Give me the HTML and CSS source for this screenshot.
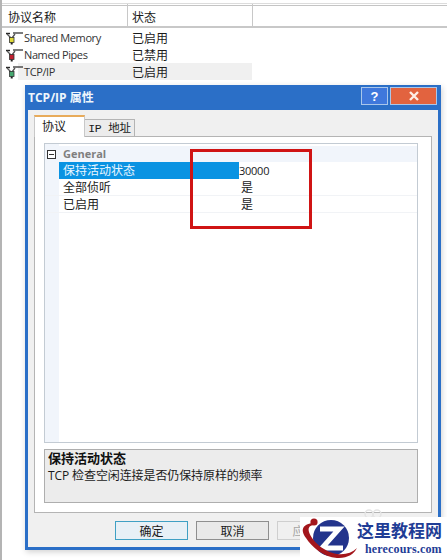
FILE: index.html
```html
<!DOCTYPE html>
<html lang="zh-CN">
<head>
<meta charset="utf-8">
<title>TCP/IP 属性</title>
<link rel="stylesheet" href="styles.css">
</head>
<body>
<svg width="0" height="0" class="defs">
  <symbol id="plug" viewBox="0 0 17 14">
    <path d="M0 2.5h4" stroke="#222" stroke-width="1.4" fill="none"/>
    <path d="M1 3l4 4M9 3L6 7" stroke="#555" stroke-width="1.3" fill="none"/>
    <path d="M7 2h10" stroke="#333" stroke-width="1.3" fill="none"/>
    <rect x="3.5" y="6.5" width="4.5" height="5" fill="currentColor" stroke="#333" stroke-width=".8"/>
    <path d="M5.7 11.5v2" stroke="#222" stroke-width="2"/>
  </symbol>
</svg>
<main class="manager">
  <div class="list-head">
    <div class="col col-name">协议名称</div>
    <div class="col col-state">状态</div>
  </div>
  <ul class="list">
    <li class="row"><svg class="plug plug-on"><use href="#plug"/></svg><span class="cell-name">Shared Memory</span><span class="cell-state">已启用</span></li>
    <li class="row"><svg class="plug plug-off"><use href="#plug"/></svg><span class="cell-name">Named Pipes</span><span class="cell-state">已禁用</span></li>
    <li class="row row-hover"><svg class="plug plug-tcp"><use href="#plug"/></svg><span class="cell-name">TCP/IP</span><span class="cell-state">已启用</span></li>
  </ul>
</main>

<section class="dialog">
  <header class="titlebar">
    <span class="title">TCP/IP 属性</span>
    <span class="winbtn help">?</span>
    <span class="winbtn close">
      <svg width="10" height="10" viewBox="0 0 10 10"><path d="M1 1l8 8M9 1l-8 8" stroke="#fdeee6" stroke-width="2.4"/></svg>
    </span>
  </header>
  <div class="client">
    <div class="tabs">
      <div class="tab tab-active">协议</div>
      <div class="tab">IP 地址</div>
    </div>
    <div class="panel">
      <div class="grid">
        <div class="group"><span class="minus"></span><span>General</span></div>
        <div class="prop prop-selected"><span class="prop-name">保持活动状态</span><span class="prop-value">30000</span></div>
        <div class="prop"><span class="prop-name">全部侦听</span><span class="prop-value prop-yes">是</span></div>
        <div class="prop"><span class="prop-name">已启用</span><span class="prop-value prop-yes">是</span></div>
      </div>
      <div class="desc">
        <div class="desc-title">保持活动状态</div>
        <div class="desc-text">TCP 检查空闲连接是否仍保持原样的频率</div>
      </div>
    </div>
    <div class="buttons">
      <button class="btn btn-default">确定</button>
      <button class="btn">取消</button>
      <button class="btn btn-disabled">应用</button>
    </div>
  </div>
</section>

<div class="marker"></div>

<aside class="watermark">
  <svg class="ghost" width="18" height="9" viewBox="0 0 18 9"><circle cx="5" cy="6" r="4" fill="none" stroke="#e4e4e4" stroke-width="1.5"/><circle cx="13" cy="6" r="4" fill="none" stroke="#e4e4e4" stroke-width="1.5"/></svg>
  <svg class="logo" width="60" height="43" viewBox="0 0 60 43">
    <circle cx="31" cy="21" r="18" fill="#23348c"/>
    <path d="M20 12H39L22 31H43" fill="none" stroke="#fff" stroke-width="5"/>
    <path d="M12 6C1 8 1 14 6 21c6 9 17 19 31 20 10 .7 17-4 20-10-5 5-12 7-20 6C24 35 12 24 9 15c-1-4 0-6 4-7z" fill="#a3161c"/>
    <circle cx="14" cy="5" r="3.6" fill="#a3161c"/>
  </svg>
  <div class="brand">
    <div class="brand-cn">这里教程网</div>
    <div class="brand-en">herecours.com</div>
  </div>
</aside>
</body>
</html>
```
FILE: styles.css
```css
* { box-sizing: border-box; }
html, body { margin: 0; padding: 0; }
body {
  width: 447px;
  height: 560px;
  overflow: hidden;
  position: relative;
  background: #fff;
  color: #1a1a1a;
  font: 12px/16px "Open Sans", "Noto Sans CJK SC", sans-serif;
}
.defs { position: absolute; }

.manager {
  height: 560px;
  padding: 3px 0 0 0;
  border-left: 2px solid #b4b4b4;
}
.list-head {
  display: flex;
  height: 25px;
  border-top: 1px solid #dcdcdc;
  background: linear-gradient(#fff 1px, #c4c4c4 1px, #c4c4c4 2px, #fff 2px);
  border-bottom: 2px solid #c8c8c8;
  align-items: stretch;
}
.col {
  display: flex;
  align-items: center;
  padding: 5px 0 0 6px;
  font-size: 12px;
}
.col-name { width: 126px; border-right: 1px solid #c8c8c8; }
.col-state { width: 125px; border-right: 1px solid #c8c8c8; padding-left: 4px; }

.list { list-style: none; margin: 0; padding: 1px 0 0; }
.row {
  display: flex;
  align-items: center;
  height: 17px;
  width: 250px;
  padding-left: 4px;
  font-size: 11px;
  color: #333;
}
.row-hover { background: linear-gradient(90deg, #fff 16px, #f0f0f0 16px); }
.plug { width: 17px; height: 14px; flex: none; }
.plug-on { color: #e0da3a; }
.plug-off { color: #c02030; }
.plug-tcp { color: #45a870; }
.cell-name { width: 109px; padding-left: 1px; white-space: nowrap; letter-spacing: -.4px; }
.cell-state { font-size: 12px; color: #1a1a1a; padding-top: 2px; }

.dialog {
  position: absolute;
  left: 25px;
  top: 85px;
  width: 416px;
  height: 465px;
  display: flex;
  flex-direction: column;
  border: 3px solid #2b6fc7;
  border-top-width: 0;
  background: #f0f0f0;
  box-shadow: 1px 2px 6px rgba(0, 0, 0, .18);
}
.titlebar {
  flex: none;
  height: 25px;
  display: flex;
  align-items: center;
  margin: 0 -3px;
  padding: 0 4px 3px 3px;
  background: #2b6fc7;
}
.title {
  flex: 1;
  padding-top: 4px;
  color: #eef6fc;
  font-size: 12px;
  font-weight: 700;
}
.winbtn {
  height: 18px;
  display: flex;
  align-items: center;
  justify-content: center;
  border: 1px solid #a9c6ea;
}
.help {
  width: 27px;
  margin-right: 2px;
  background: #3f78dc;
  color: #fff;
  font: 700 13px "Liberation Sans", sans-serif;
}
.close { width: 47px; background: #e2633f; }

.client {
  flex: 1;
  display: flex;
  flex-direction: column;
  padding: 6px 6px 0;
  min-height: 0;
}
.tabs {
  flex: none;
  display: flex;
  align-items: flex-end;
  height: 21px;
  margin-bottom: -1px;
  position: relative;
  z-index: 1;
}
.tab {
  width: 50px;
  height: 18px;
  padding-top: 2px;
  display: flex;
  align-items: center;
  justify-content: center;
  border: 1px solid #b4b4b4;
  border-left-width: 0;
  background: #ececec;
  font: 11.5px/14px "Liberation Mono", "Noto Sans CJK SC", monospace;
  letter-spacing: -.2px;
}
.tab-active {
  width: 51px;
  height: 22px;
  padding-top: 0;
  border: 1px solid #c8c8c8;
  border-top: 2px solid #e8ab5a;
  border-bottom: 0;
  background: #fff;
  font: 12px/16px "Noto Sans CJK SC", sans-serif;
  letter-spacing: 0;
  justify-content: flex-start;
  padding-left: 7px;
  padding-bottom: 2px;
}

.panel {
  flex: 1;
  display: flex;
  flex-direction: column;
  gap: 6px;
  padding: 6px 13px 9px 9px;
  background: #fff;
  border: 1px solid #b4b4b4;
  min-height: 0;
}
.grid {
  height: 300px;
  flex: none;
  border: 1px solid #c3cbd3;
  padding-top: 2px;
  background: linear-gradient(90deg, #f1f5fb 14px, #fff 14px);
}
.group {
  display: flex;
  align-items: center;
  height: 16px;
  padding-left: 2px;
  color: #7f7f7f;
  font-weight: 700;
  font-size: 11px;
  background: #f1f5fb;
  gap: 7px;
}
.minus {
  width: 9px;
  height: 9px;
  border: 1px solid #333;
  background: linear-gradient(#333, #333) center / 5px 1px no-repeat #fff;
}
.prop {
  display: flex;
  height: 17px;
  align-items: center;
  padding-left: 14px;
  border-bottom: 1px solid #f1f3f6;
}
.prop-name {
  width: 180px;
  height: 100%;
  padding: 1px 0 0 4px;
  font-size: 12px;
  line-height: 16px;
}
.prop-value { font-size: 11px; letter-spacing: -.25px; }
.prop-yes { padding: 2px 0 0 2px; font-size: 12px; letter-spacing: 0; }
.prop-selected { border-bottom: 0; }
.prop-selected .prop-name { background: #0a93e2; color: #e9f6ff; }

.desc {
  flex: 1;
  padding: 0 3px;
  background: #ececec;
  border: 1px solid #aeaeae;
}
.desc-title { font-weight: 700; font-size: 13px; line-height: 16px; color: #111; }
.desc-text { font-size: 12px; line-height: 20px; letter-spacing: -.1px; }

.buttons {
  flex: none;
  height: 34px;
  display: flex;
  gap: 8px;
  padding: 8px 0 0 81px;
}
.btn {
  width: 73px;
  height: 19px;
  padding: 0;
  font: 12px/16px "Noto Sans CJK SC", sans-serif;
  color: #1a1a1a;
  background: #e9e9e9;
  border: 1px solid #8f8f8f;
}
.btn-default { background: #e7f0f6; border-color: #3fa0c4; }
.btn-disabled { background: #f0f0f0; border-color: #cfcfcf; color: #a5a5a5; padding-right: 18px; }

.marker {
  position: absolute;
  left: 190px;
  top: 149px;
  width: 122px;
  height: 80px;
  border: 3px solid #d01414;
}

.watermark {
  position: absolute;
  right: 0;
  bottom: 0;
  width: 147px;
  height: 43px;
  display: flex;
  background: #fff;
}
.ghost { position: absolute; left: 64px; top: -9px; }
.logo { flex: none; }
.brand { flex: none; margin-left: -3px; padding-top: 3px; }
.brand-cn {
  font: 700 17px/20px "Noto Sans CJK SC", serif;
  color: #1f3d96;
}
.brand-en {
  margin: 2px 0 0 8px;
  font: 700 12px/14px "Liberation Serif", serif;
  color: #1f3d96;
  letter-spacing: .15px;
  white-space: nowrap;
}
```
